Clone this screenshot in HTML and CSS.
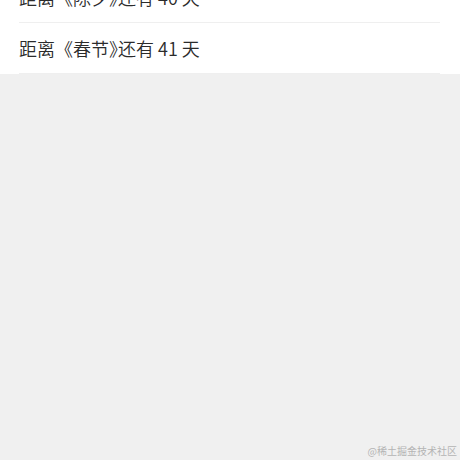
FILE: index.html
```html
<!DOCTYPE html>
<html lang="zh-CN">
<head>
  <meta charset="UTF-8">
  <meta name="viewport" content="width=device-width, initial-scale=1.0">
  <title>节日倒计时</title>
  <link rel="stylesheet" href="styles.css">
</head>
<body>
  <ul class="list">
    <li class="item">距离《除夕<span class="close">》</span>还有 40 天</li>
    <li class="item">距离《春节<span class="close">》</span>还有 41 天</li>
  </ul>

  <div class="watermark">@稀土掘金技术社区</div>
</body>
</html>
```

FILE: styles.css
```css
html, body {
  height: 100%;
}

body {
  margin: 0;
  background-color: #f0f0f0;
  font-family: "Noto Sans CJK SC", "Noto Sans", sans-serif;
  color: #333;
  display: flex;
  flex-direction: column;
}

.list {
  list-style: none;
  margin: -28px 0 0;
  padding: 0 20px 0 19px;
  background-color: #fff;
}

.item {
  height: 50px;
  line-height: 50px;
  font-size: 18px;
  font-weight: 350;
  color: #2b2b2b;
  border-bottom: 1px solid #efefef;
}

/* closing bracket set half-width, like the phone renders it */
.close {
  font-feature-settings: "halt";
}

.watermark {
  margin-top: auto;
  padding: 0 3px 2px 0;
  text-align: right;
  font-size: 10px;
  line-height: 14px;
  color: #b4b4b4;
}
```
